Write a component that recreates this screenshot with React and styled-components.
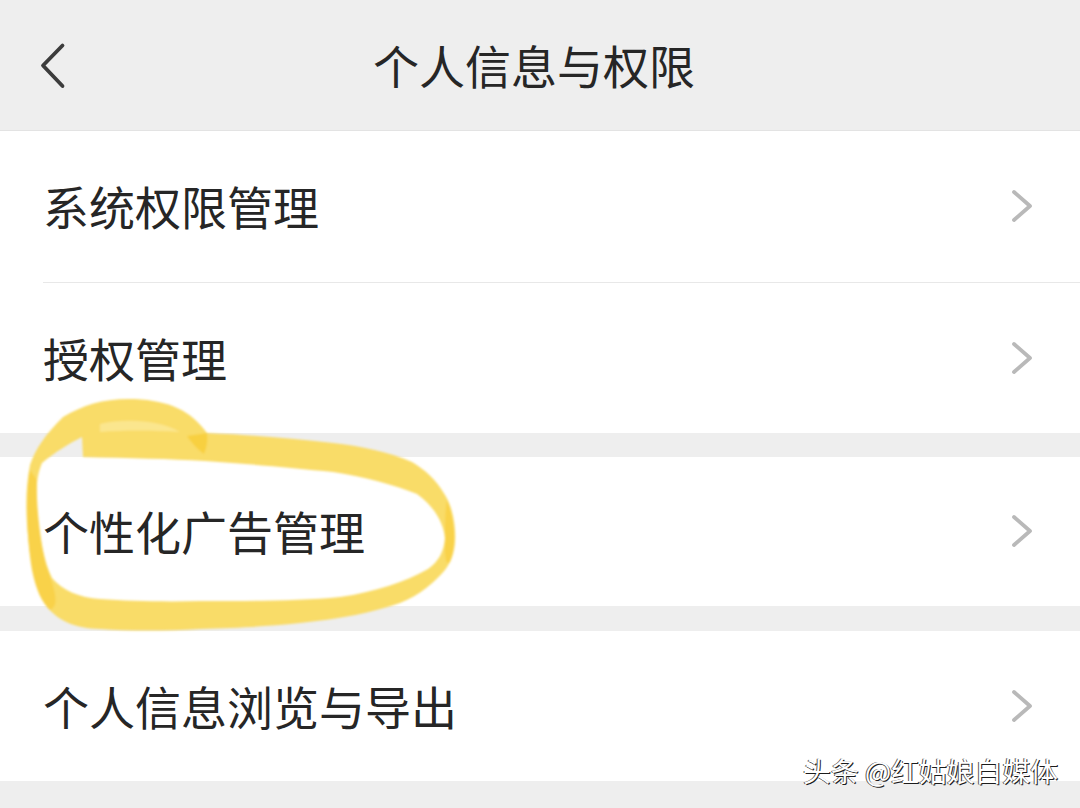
import React from 'react';
import styled, { createGlobalStyle } from 'styled-components';

const GlobalStyle = createGlobalStyle`
  html, body {
    margin: 0;
    padding: 0;
    background: #eeeeee;
  }
`;

const Page = styled.div`
  position: relative;
  width: 1080px;
  height: 808px;
  overflow: hidden;
  background: #eeeeee;
  color: #262626;
  font-family: "Noto Sans CJK SC", "Noto Sans", sans-serif;
`;

const Header = styled.header`
  display: grid;
  grid-template-columns: 80px 1fr 92px;
  align-items: center;
  height: 130px;
  box-sizing: content-box;
  border-bottom: 1px solid #e3e3e3;
`;

const BackButton = styled.div`
  display: flex;
  padding-left: 38px;
  margin-top: 2px;
`;

const Title = styled.h1`
  margin: -2px 0 0;
  font-size: 46px;
  font-weight: 400;
  line-height: 60px;
  text-align: center;
`;

const Group = styled.section`
  background: #ffffff;
  margin-bottom: ${(p) => p.$gap}px;
`;

const Row = styled.div`
  display: flex;
  align-items: center;
  justify-content: space-between;
  height: ${(p) => p.$height}px;
  padding: 0 46px 3px 43px;
  box-sizing: border-box;
`;

const Label = styled.span`
  font-size: 46px;
  line-height: 60px;
`;

const Divider = styled.div`
  height: 1px;
  margin-left: 43px;
  background: #e8e8e8;
`;

const Chevron = styled.svg`
  display: block;
  margin-top: 2px;
`;

const Marker = styled.svg`
  position: absolute;
  left: 0;
  top: 0;
  pointer-events: none;
`;

const Watermark = styled.div`
  position: absolute;
  right: 22px;
  top: 751px;
  font-size: 27.8px;
  line-height: 38px;
  white-space: nowrap;
  color: #ffffff;
  text-shadow: 1px 1px 0 #1c1c1c, -1px 0 0 #555555;
`;

const RowChevron = () => (
  <Chevron width="24" height="36" viewBox="0 0 24 36" fill="none">
    <path d="M4 4 L20 18 L4 32" stroke="#b9b9b9" strokeWidth="3.8" strokeLinecap="round" strokeLinejoin="round" />
  </Chevron>
);

const groups = [
  { gap: 24, rows: [{ label: '系统权限管理', height: 151 }, { label: '授权管理', height: 150 }] },
  { gap: 25, rows: [{ label: '个性化广告管理', height: 149 }] },
  { gap: 0, rows: [{ label: '个人信息浏览与导出', height: 150 }] },
];

const App = () => (
  <Page>
    <GlobalStyle />
    <Header>
      <BackButton>
        <svg width="30" height="48" viewBox="0 0 30 48" fill="none">
          <path d="M24.5 3.5 L5 23.5 L24.5 44" stroke="#3c3c3c" strokeWidth="3.8" strokeLinecap="round" strokeLinejoin="round" />
        </svg>
      </BackButton>
      <Title>个人信息与权限</Title>
    </Header>
    {groups.map((group) => (
      <Group key={group.rows[0].label} $gap={group.gap}>
        {group.rows.map((row, i) => (
          <React.Fragment key={row.label}>
            {i > 0 && <Divider />}
            <Row $height={row.height}>
              <Label>{row.label}</Label>
              <RowChevron />
            </Row>
          </React.Fragment>
        ))}
      </Group>
    ))}
    <Marker width="1080" height="808" viewBox="0 0 1080 808">
      <defs>
        <filter id="soft">
          <feGaussianBlur stdDeviation="1" />
        </filter>
      </defs>
      <g filter="url(#soft)">
        <path
          fillRule="evenodd"
          fill="#f9dc68"
          d="M207 433 C190 410 170 401 135 399 C105 398 85 404 63 417 C45 435 36 448 30 465 C25 490 26 515 28 535 C31 570 38 592 47 607 C60 622 75 628 100 629 C130 631 165 631 200 629 C240 628 270 626 300 623 C340 619 375 612 400 603 C420 595 435 582 445 570 C454 558 456 545 455 530 C454 515 450 503 445 495 C435 478 425 470 412 462 C390 452 360 446 333 443 C290 438 250 435 207 433 Z
             M82 437 L83 457 C130 458 170 459 205 461 C250 464 295 468 333 472 C365 477 395 485 417 494 C432 505 443 520 445 538 C444 552 438 562 428 569 C405 582 375 592 340 597 C300 601 250 601 200 601 C165 602 130 601 100 599 C80 598 62 590 52 578 C44 562 39 535 37 510 C35 490 37 475 42 463 C55 452 70 443 82 437 Z"
        />
        <path
          fill="#f8d040"
          d="M187 436 L207 433 C208 440 207 447 204 454 C197 449 191 442 187 436 Z"
        />
        <path
          fill="#f9d24a"
          d="M30 470 C25 500 27 540 32 570 C36 590 42 603 50 610 C60 605 55 590 46 565 C40 540 36 505 37 480 Z"
        />
        <path
          fill="#f9d24a"
          d="M447 500 C455 520 457 545 450 562 C447 566 444 560 445 540 C445 525 445 510 447 500 Z"
        />
        <path
          fill="#fbe68e"
          d="M100 424 C125 418 160 420 180 432 C150 430 125 430 100 432 Z"
        />
      </g>
    </Marker>
    <Watermark>头条 @红姑娘自媒体</Watermark>
  </Page>
);

export default App;
